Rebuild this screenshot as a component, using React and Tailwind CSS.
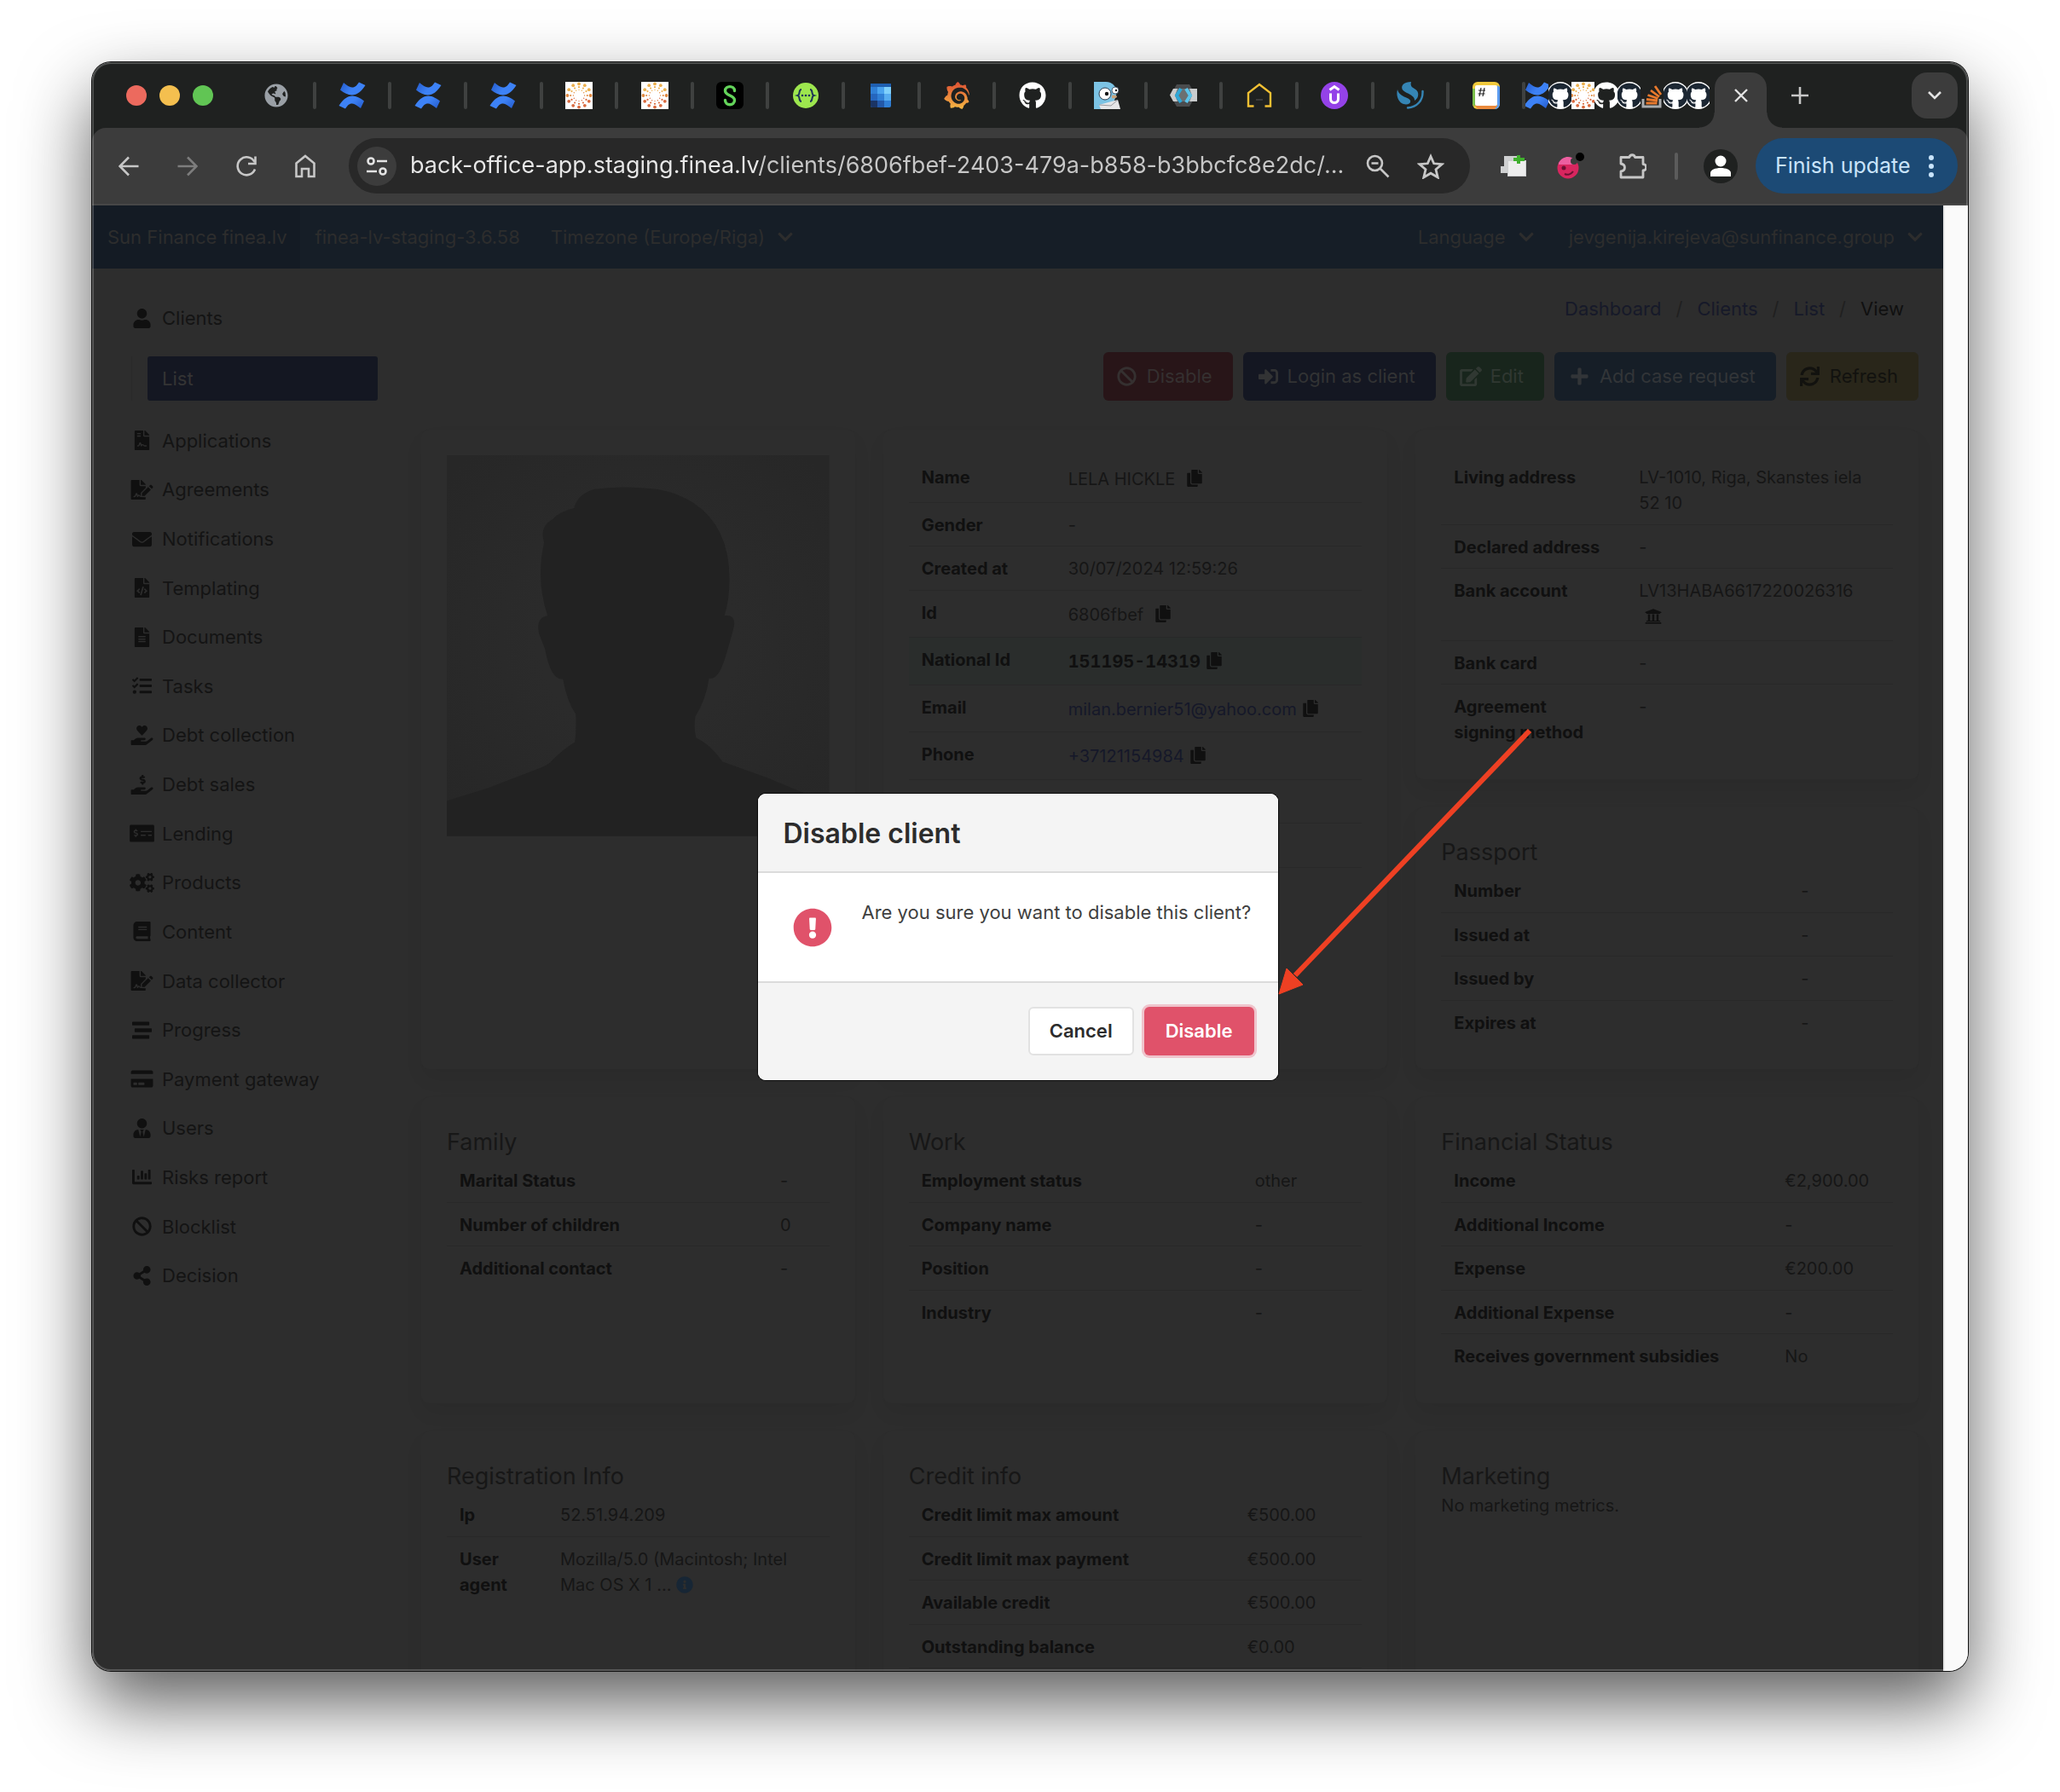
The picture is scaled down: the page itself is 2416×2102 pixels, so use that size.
import React from "react";
import {
  FaUser, FaFileContract, FaFileSignature, FaEnvelope, FaFileCode, FaFileAlt, FaTasks,
  FaHandHoldingHeart, FaHandHoldingUsd, FaMoneyCheckAlt, FaCogs, FaBook, FaStream,
  FaCreditCard, FaUserTie, FaChartBar, FaBan, FaShareAlt, FaCopy, FaUniversity,
  FaInfoCircle, FaSignInAlt, FaEdit, FaPlus, FaSync, FaExclamationCircle, FaGithub,
  FaGlobeAmericas, FaChevronDown,
} from "react-icons/fa";
import { SiGrafana } from "react-icons/si";

/* ---------- favicons ---------- */

const Confluence = () => (
  <svg viewBox="0 0 32 32" className="size-8 shrink-0">
    <defs>
      <linearGradient id="cfTop" x1="0" y1="0" x2="1" y2="0.4">
        <stop offset="0" stopColor="#2359c9" />
        <stop offset="0.6" stopColor="#3d82f6" />
      </linearGradient>
      <linearGradient id="cfBottom" x1="1" y1="1" x2="0" y2="0.4">
        <stop offset="0" stopColor="#2359c9" />
        <stop offset="0.6" stopColor="#3d82f6" />
      </linearGradient>
    </defs>
    <path d="M6 1 2 9.500c4.500 3.500 9 6 13.500 6 6.500 0 11-4 16-11.500L24 .5c-3 4.500-5 6-8 6S10 4 6 1Z" fill="url(#cfTop)" />
    <path d="M26 31 30 22.500c-4.500-3.500-9-6-13.500-6-6.500 0-11 4-16 11.500l7.500 3.500c3-4.500 5-6 8-6s6 2.500 10 5.500Z" fill="url(#cfBottom)" />
  </svg>
);

const Sun = () => (
  <svg viewBox="0 0 32 32" className="size-8 shrink-0">
    <rect width="32" height="32" fill="#fff" />
    {[[13.6, 1.9], [9.8, 1.1], [6.6, 0.7]].map(([r, s], ring) =>
      Array.from({ length: 12 }, (_, i) => {
        const a = (i * Math.PI) / 6;
        const y = 16 + r * Math.sin(a);
        return (
          <circle key={ring + "-" + i} cx={16 + r * Math.cos(a)} cy={y} r={s}
            fill={y > 19 ? "#d96a3f" : y > 12 ? "#e08a42" : "#ecb04e"} />
        );
      })
    )}
  </svg>
);

const SLogo = () => (
  <svg viewBox="0 0 32 32" className="size-8 shrink-0">
    <rect width="32" height="32" rx="6" fill="#000" />
    <path d="M21.500 10.500C21.500 4 10.500 4 10.500 10.500c0 6 11 5 11 11 0 7-11 7-11 0" fill="none" stroke="#63d35a" strokeWidth="3.400" strokeLinecap="round" />
  </svg>
);

const Swagger = () => (
  <svg viewBox="0 0 32 32" className="size-8 shrink-0">
    <circle cx="16" cy="16" r="15" fill="#9de64e" />
    <path d="M11 9c-4 0-1 6-4.500 7 3.500 1 .5 7 4.500 7M21 9c4 0 1 6 4.500 7-3.500 1-.5 7-4.500 7" fill="none" stroke="#1d3557" strokeWidth="2" />
    <g fill="#1d3557"><circle cx="12" cy="16" r="1.300" /><circle cx="16" cy="16" r="1.300" /><circle cx="20" cy="16" r="1.300" /></g>
  </svg>
);

const Squares = () => (
  <svg viewBox="0 0 32 32" className="size-8 shrink-0">
    <rect x="4" y="2" width="24" height="28" rx="2" fill="#2f7fd6" />
    <path d="M4 2h24v4H4z" fill="#1f5fb0" />
    <path d="M12 6h8v8h-8z" fill="#4aa3ef" /><path d="M20 6h8v8h-8z" fill="#7fd0fb" />
    <path d="M4 14h8v8H4z" fill="#2566be" /><path d="M20 14h8v8h-8z" fill="#56acf0" />
    <path d="M4 22h8v8H6a2 2 0 0 1-2-2z" fill="#1b3464" /><path d="M12 22h8v8h-8z" fill="#2358a8" />
  </svg>
);

const Gopher = () => (
  <svg viewBox="0 0 32 32" className="size-8 shrink-0">
    <path d="M0 0h14c8 0 12 6 13 12l-3 10-6 10H0Z" fill="#7cc3e4" />
    <circle cx="13" cy="14" r="7" fill="#fff" stroke="#2c3e50" strokeWidth="1" />
    <circle cx="25" cy="10" r="4" fill="#fff" stroke="#2c3e50" strokeWidth="0.800" />
    <circle cx="15" cy="14" r="2.200" fill="#111" /><circle cx="26" cy="10" r="1.200" fill="#111" />
    <path d="M21 16c3-1 6 0 6 1.500S23 20 21 19Z" fill="#c9a27a" />
    <path d="m6 27 22-6 3 11H8Z" fill="#e6e6e8" /><path d="m6 27 14 1 8-7" fill="none" stroke="#9a9aa0" />
  </svg>
);

const Keycloak = () => (
  <svg viewBox="0 0 32 32" className="size-8 shrink-0">
    <path d="M8 3h15l4 7v12l-4 7H8l-5-9V12Z" fill="#4a4c4e" />
    <path d="M4 8h28v15H4L0 15.500Z" fill="#c9cccd" />
    <path d="M9 8h14l3 8-3 7H9l-3-7Z" fill="#6b7072" />
    <path d="M13 8 8 16l5 8" fill="none" stroke="#2fa8d8" strokeWidth="4" />
    <path d="m19 8 5 8-5 8" fill="none" stroke="#5cc4ea" strokeWidth="4" />
  </svg>
);

const House = () => (
  <svg viewBox="0 0 32 32" className="size-8 shrink-0">
    <path d="M9.500 28.500H3V13L16 3l13 10v15.500h-6.500" fill="none" stroke="#f2c033" strokeWidth="2.400" />
    <path d="M12 21h8" stroke="#3c3c3c" strokeWidth="2" />
  </svg>
);

const PurpleU = () => (
  <svg viewBox="0 0 32 32" className="size-8 shrink-0">
    <circle cx="16" cy="16" r="16" fill="#9442e8" />
    <path d="m10.500 9.500 5.500-4 5.500 4M11.500 13.500V20c0 6 9 6 9 0v-6.500" fill="none" stroke="#fff" strokeWidth="3" />
  </svg>
);

const Swirl = () => (
  <svg viewBox="0 0 32 32" className="size-8 shrink-0">
    <path d="M17 0C9 0 5 4 6.500 8.500 8 13 22 15 21 22c4-2 6-8 2.500-12C21 7 15 7 17 0Z" fill="#3585b5" />
    <path d="M1 9c-2 7 1 15 7 17 5 1.500 9-1 8-4C15 18 3 18 1 9Z" fill="#3585b5" />
    <path d="M30.500 11C31 22 24 29.500 13 30.500" fill="none" stroke="#3585b5" strokeWidth="2.400" strokeLinecap="round" />
  </svg>
);

const HashTile = () => (
  <svg viewBox="0 0 32 32" className="size-8 shrink-0">
    <rect width="32" height="32" rx="6" fill="#f0c93c" />
    <path d="M29 4v24l-4 4h1a6 6 0 0 0 6-6V6z" fill="#5b9bef" />
    <path d="M3 27h26v1l-3 4H6l-3-4z" fill="#ea8a3c" />
    <path d="M0 8h3v20l-1 1-2-3z" fill="#7cc04b" />
    <rect x="3" y="4" width="26" height="24" rx="2" fill="#fff" />
    <path d="m10 7-2 10m6-10-2 10M7 10h8M6.500 14h8" stroke="#222" strokeWidth="1.200" />
  </svg>
);

const Github = () => <FaGithub className="size-8 shrink-0 text-white" />;

const GithubRing = () => (
  <span className="flex size-8 shrink-0 items-center justify-center rounded-full bg-white">
    <FaGithub className="size-[30px] text-[#1c2733]" />
  </span>
);

const Stack = () => (
  <svg viewBox="0 0 32 32" className="size-8 shrink-0">
    <path d="M5 20v9h20v-9" fill="none" stroke="#a9abad" strokeWidth="3" />
    <path d="M8.500 25h13M9 20.500l13 1.500M10.500 15.500l12 4M14 10l10 7.500M19 5l7 10" stroke="#e8792d" strokeWidth="2.800" />
  </svg>
);

const tabs = [
  () => <FaGlobeAmericas className="size-7 text-[#9aa0a6]" />,
  Confluence, Confluence, Confluence, Sun, Sun, SLogo, Swagger, Squares,
  () => <SiGrafana className="size-8" fill="url(#grafana)" />,
  Github, Gopher, Keycloak, House, PurpleU, Swirl, HashTile,
];
const narrowTabs = [Confluence, GithubRing, Sun, Github, GithubRing, Stack, GithubRing, GithubRing];

/* ---------- browser chrome ---------- */

function TabStrip() {
  return (
    <div className="flex h-[77px] shrink-0 items-center bg-[#1f2120]">
      <svg className="absolute size-0" aria-hidden="true">
        <defs>
          <linearGradient id="grafana" x1="0" y1="0" x2="0" y2="1">
            <stop offset="0" stopColor="#dd4f33" /><stop offset="1" stopColor="#f5b843" />
          </linearGradient>
        </defs>
      </svg>
      <div className="flex w-[174px] shrink-0 gap-[15px] pl-10">
        <button aria-label="Close window" className="size-6 rounded-full bg-[#ec6a5e]" />
        <button aria-label="Minimise window" className="size-6 rounded-full bg-[#f4bf4f]" />
        <button aria-label="Zoom window" className="size-6 rounded-full bg-[#61c554]" />
      </div>
      <div className="flex min-w-0 flex-1">
        {tabs.map((Icon, i) => (
          <div key={i} className="flex h-8 flex-1 items-center">
            <span className="flex flex-1 justify-center"><Icon /></span>
            <span className="h-8 w-1 rounded-full bg-[#3f4140]" />
          </div>
        ))}
      </div>
      <div className="flex w-[222px] shrink-0">
        {narrowTabs.map((Icon, i) => (
          <span key={i} className="flex h-8 w-[27px] justify-center overflow-hidden"><Icon /></span>
        ))}
      </div>
      <div className="relative flex h-[65px] w-[61px] shrink-0 items-center justify-center self-end rounded-t-[18px] bg-[#3c3c3c] pb-[11px]">
        <span className="absolute bottom-0 right-full size-[18px] bg-[radial-gradient(circle_at_0_0,#1f2120_17px,#3c3c3c_18px)]" />
        <span className="absolute bottom-0 left-full size-[18px] bg-[radial-gradient(circle_at_100%_0,#1f2120_17px,#3c3c3c_18px)]" />
        <button aria-label="Close tab">
          <svg viewBox="0 0 16 16" className="size-4"><path d="m1 1 14 14M15 1 1 15" stroke="#e3e3e3" strokeWidth="2.400" /></svg>
        </button>
      </div>
      <div className="flex w-[236px] shrink-0 items-center justify-between pl-[29px] pr-3">
        <button aria-label="New tab">
          <svg viewBox="0 0 20 20" className="size-5"><path d="M10 0v20M0 10h20" stroke="#c7c7c7" strokeWidth="2.600" /></svg>
        </button>
        <button aria-label="Search tabs" className="flex h-[54px] w-[54px] items-center justify-center rounded-[18px] bg-[#3c3c3c]">
          <svg viewBox="0 0 16 10" className="h-[10px] w-4"><path d="m1 1 7 7 7-7" fill="none" stroke="#e3e3e3" strokeWidth="2.600" /></svg>
        </button>
      </div>
    </div>
  );
}

const ToolButton = ({ label, children, className = "" }) => (
  <button aria-label={label} className={"flex size-8 shrink-0 items-center justify-center " + className}>{children}</button>
);

function Toolbar() {
  return (
    <div className="shrink-0 bg-[#1f2120]">
      <div className="flex h-[91px] items-center rounded-t-[16px] border-b-2 border-[#474747] bg-[#3c3c3c] pl-[27px] pr-3">
        <div className="flex w-[274px] shrink-0 gap-[37px] text-[#c7c7c7]">
          <ToolButton label="Back">
            <svg viewBox="0 0 24 24" className="size-6"><path d="M23.500 12H2M12 1.500 1.500 12 12 22.500" fill="none" stroke="currentColor" strokeWidth="2.600" /></svg>
          </ToolButton>
          <ToolButton label="Forward" className="text-[#7d7d7d]">
            <svg viewBox="0 0 24 24" className="size-6"><path d="M.5 12H22M12 1.500 22.500 12 12 22.500" fill="none" stroke="currentColor" strokeWidth="2.600" /></svg>
          </ToolButton>
          <ToolButton label="Reload">
            <svg viewBox="0 0 24 24" className="size-6"><path d="M22 15.500A10.500 10.500 0 1 1 21.500 7M22.500.5V9H14" fill="none" stroke="currentColor" strokeWidth="2.600" /></svg>
          </ToolButton>
          <ToolButton label="Home">
            <svg viewBox="0 0 26 28" className="h-7 w-[26px]"><path d="M2.500 10.500 13 2l10.500 8.500V26H17v-9H9v9H2.500Z" fill="none" stroke="currentColor" strokeWidth="2.600" /></svg>
          </ToolButton>
        </div>
        <div className="flex h-[65px] min-w-0 flex-1 items-center rounded-full bg-[#282828] pl-[10px] pr-[30px]">
          <button aria-label="Site information" className="flex size-[46px] shrink-0 items-center justify-center rounded-full bg-[#3c3c3c]">
            <svg viewBox="0 0 24 22" className="h-[22px] w-6" fill="none" stroke="#e3e3e3" strokeWidth="2.600">
              <circle cx="5" cy="5" r="3.500" /><path d="M12 5h12M0 17h12" /><circle cx="19" cy="17" r="3.500" />
            </svg>
          </button>
          <input
            aria-label="Address"
            readOnly
            value="back-office-app.staging.finea.lv/clients/6806fbef-2403-479a-b858-b3bbcfc8e2dc/..."
            className="ml-4 min-w-0 flex-1 bg-[linear-gradient(to_right,#e8e8e8_409px,#c7c7c7_409px)] bg-clip-text text-[27px] text-transparent outline-none"
          />
          <div className="flex gap-[30px] text-[#c7c7c7]">
            <ToolButton label="Zoom">
              <svg viewBox="0 0 28 28" className="size-7" fill="none" stroke="currentColor" strokeWidth="2.600"><circle cx="10.500" cy="10.500" r="8.500" /><path d="M17 17l9.500 9.500M6.500 10.500h8" /></svg>
            </ToolButton>
            <ToolButton label="Bookmark">
              <svg viewBox="0 0 32 30" className="h-[30px] w-8" fill="none" stroke="currentColor" strokeWidth="2.800"><path d="m16 3.500 3.700 8.300 9.300.9-7 6.100 2.200 9.200L16 23.200 7.800 28l2.200-9.200-7-6.100 9.300-.9Z" /></svg>
            </ToolButton>
          </div>
        </div>
        <div className="flex w-[335px] shrink-0 items-center pl-9">
          <ToolButton label="Add clip extension">
            <svg viewBox="0 0 32 30" className="h-[30px] w-8">
              <path d="M4 3h18v5h8v19H8v-4H0v-8h4Z" fill="#cfd0d1" /><path d="M9 9h20v17H9z" fill="#ededed" />
              <path d="M21 2v10M15 7h13" stroke="#3fae2d" strokeWidth="4" />
            </svg>
          </ToolButton>
          <ToolButton label="Recorder extension" className="ml-[34px]">
            <svg viewBox="0 0 32 32" className="size-8">
              <circle cx="13" cy="18" r="12.500" fill="#d8265f" /><path d="M2 12C6 4 16 3 20 8l1 6H2Z" fill="#ec5fa0" />
              <circle cx="8" cy="18" r="2.500" fill="#6d1033" /><path d="M9 25c4 2 8 0 10-3" stroke="#6d1033" strokeWidth="2" fill="none" />
              <circle cx="20" cy="10" r="4" fill="#3c3c3c" /><circle cx="27" cy="5" r="5" fill="#000" />
            </svg>
          </ToolButton>
          <ToolButton label="Extensions" className="ml-[41px]">
            <svg viewBox="0 0 32 34" className="h-[34px] w-8"><path d="M2 6.500h10a3.300 3.300 0 0 1 6.500 0H28v8a3.600 3.600 0 0 1 0 7.500v8H2v-7c6-1 6-8 0-9Z" fill="none" stroke="#c7c7c7" strokeWidth="2.800" strokeLinejoin="round" /></svg>
          </ToolButton>
          <span className="ml-[33px] h-8 w-1 rounded-full bg-[#5c5c5c]" />
          <button aria-label="Profile" className="ml-[30px] flex size-10 items-center justify-center rounded-full bg-[#1f2120]">
            <svg viewBox="0 0 24 26" className="h-[26px] w-6" fill="#fff"><circle cx="12" cy="7" r="6.500" /><path d="M0 25v-4c0-4 6-6 12-6s12 2 12 6v4Z" /></svg>
          </button>
        </div>
        <button className="flex h-[65px] w-[237px] shrink-0 items-center justify-between rounded-full bg-[#1c4a75] pl-[23px] pr-7 text-[25px] text-[#c9e4fb]">
          Finish update
          <svg viewBox="0 0 6 28" className="h-7 w-[6px]" fill="#c9e4fb"><circle cx="3" cy="4" r="3" /><circle cx="3" cy="14" r="3" /><circle cx="3" cy="24" r="3" /></svg>
        </button>
      </div>
    </div>
  );
}

/* ---------- page ---------- */

function NavBar() {
  const chevron = <FaChevronDown className="size-5" />;
  return (
    <nav className="flex h-[74px] shrink-0 items-stretch bg-[#161e27] text-[22px] text-[#2d2d2d]">
      <a href="#home" className="flex items-center bg-[#141b24] pl-[18px] pr-[15px]">Sun Finance finea.lv</a>
      <span className="flex items-center px-[18px]">finea-lv-staging-3.6.58</span>
      <button className="flex items-center gap-[14px] px-[18px]">Timezone (Europe/Riga) {chevron}</button>
      <button className="ml-auto flex items-center gap-[14px] px-[20px]">Language {chevron}</button>
      <button className="flex items-center gap-[14px] pl-[20px] pr-[23px]">jevgenija.kirejeva@sunfinance.group {chevron}</button>
    </nav>
  );
}

const menu = [
  [FaFileContract, "Applications"], [FaFileSignature, "Agreements"], [FaEnvelope, "Notifications"],
  [FaFileCode, "Templating"], [FaFileAlt, "Documents"], [FaTasks, "Tasks"],
  [FaHandHoldingHeart, "Debt collection"], [FaHandHoldingUsd, "Debt sales"], [FaMoneyCheckAlt, "Lending"],
  [FaCogs, "Products"], [FaBook, "Content"], [FaFileSignature, "Data collector"], [FaStream, "Progress"],
  [FaCreditCard, "Payment gateway"], [FaUserTie, "Users"], [FaChartBar, "Risks report"],
  [FaBan, "Blocklist"], [FaShareAlt, "Decision"],
];

const MenuLink = ({ icon: Icon, children }) => (
  <a href="#menu" className="flex items-center gap-[6px]">
    <span className="flex w-9 justify-center"><Icon className="h-[23px] w-[29px] text-[#101010]" /></span>
    {children}
  </a>
);

function Sidebar() {
  return (
    <aside className="w-[386px] shrink-0 pl-10 pr-[51px] pt-[43px] text-[22px] leading-[30px] text-[#141414]">
      <MenuLink icon={FaUser}>Clients</MenuLink>
      <div className="ml-[6px] mt-[30px] border-l border-[#292929] pl-[18px]">
        <a href="#list" className="flex h-[52px] items-center rounded-[3px] bg-[#141722] px-[17px] text-[#343434]">List</a>
      </div>
      <ul className="mt-[18px] flex h-[1037px] flex-col">
        {menu.map(([Icon, label]) => (
          <li key={label} className="flex flex-1 items-center"><MenuLink icon={Icon}>{label}</MenuLink></li>
        ))}
      </ul>
    </aside>
  );
}

const Card = ({ title, children, className = "" }) => (
  <section className={"rounded-[9px] bg-[#2d2d2d] p-[30px] shadow-[0_12px_24px_-3px_rgba(0,0,0,0.07)] " + className}>
    {title && <h2 className="h-[42px] text-[27px] leading-[45px] text-[#171717]">{title}</h2>}
    {children}
  </section>
);

const Rows = ({ rows, col }) => (
  <table className="w-full table-fixed text-[20px] leading-[30px]">
    <colgroup><col className={col} /><col /></colgroup>
    <tbody>
      {rows.map(([label, value, extra = ""], i) => (
        <tr key={i} className={"border-b border-[#282828] align-top last:border-b-0 *:pb-[10px] even:*:pb-[9px] " + extra}>
          <th scope="row" className="px-[15px] pt-[11px] text-left font-bold text-[#101010]">{label}</th>
          <td className="px-[15px] pt-[11px]">{value}</td>
        </tr>
      ))}
    </tbody>
  </table>
);

const Copyable = ({ children, wide }) => (
  <span className="flex h-[34px] items-center">
    {children}
    <button aria-label="Copy" className={wide ? "mb-[3px] ml-[13px]" : "mb-[3px] ml-[6px]"}><FaCopy className="size-5 text-[#101010]" /></button>
  </span>
);

function Portrait() {
  return (
    <svg viewBox="0 0 448 446" className="w-full" role="img" aria-label="Client photo">
      <defs>
        <radialGradient id="halo" cx="0.5" cy="0.48" r="0.65">
          <stop offset="0.4" stopColor="#2b2b2b" /><stop offset="1" stopColor="#272727" />
        </radialGradient>
      </defs>
      <rect width="448" height="446" fill="url(#halo)" />
      <path
        fill="#222222"
        d="M0 446V405L48 390 105 368Q116 364 121 360 135 345 150 336 152 320 151 303 141 289 136 262 122 264 115 227L108 209Q104 190 118 188 104 145 114 102 108 84 124 75 132 66 149 62 153 46 172 40 205 35 247 40 270 44 289 56 331 84 331 145 331 170 325 188 341 186 335 206L327 234Q318 265 307 261 304 285 291 306 289 320 292 331 308 338 323 359L373 377 419 396 448 405V446Z"
      />
    </svg>
  );
}

const actions = [
  [FaBan, "Disable", "bg-[#281518] text-[#353030] pl-4 gap-3", "w-[23px]"],
  [FaSignInAlt, "Login as client", "bg-[#141722] text-[#323334] pl-[18px] gap-[11px]", "w-[23px]"],
  [FaEdit, "Edit", "bg-[#18251c] text-[#303832] pl-4 gap-[10px]", "w-[26px]"],
  [FaPlus, "Add case request", "bg-[#161e27] text-[#323538] pl-[18px] gap-3", "w-[23px]"],
  [FaSync, "Refresh", "bg-[#29261a] text-[#12120f] pl-4 gap-3", "w-[23px]"],
];

function Content() {
  const link = "text-[#151829]";
  return (
    <main className="min-w-0 flex-1 pr-[29px] pt-8">
      <nav aria-label="Breadcrumb" className="flex h-[30px] items-center justify-end gap-[17px] pr-[17px] text-[22px] text-[#202020]">
        <a href="#dashboard" className="text-[#161929]">Dashboard</a>/
        <a href="#clients" className="text-[#161929]">Clients</a>/
        <a href="#list" className="text-[#161929]">List</a>/
        <span className="text-[#101010]">View</span>
      </nav>
      <div className="mt-9 flex h-[57px] justify-end gap-3">
        {actions.map(([Icon, label, tone, size]) => (
          <button key={label} className={"flex items-center rounded-[6px] pr-6 text-[22px] " + tone}><Icon className={"h-[23px] " + size} />{label}</button>
        ))}
      </div>
      <div className="mt-[34px] grid grid-cols-[509fr_592fr_590fr] gap-[33px] text-[20px] text-[#161616]">
        <Card><Portrait /></Card>
        <Card>
          <Rows
            col="w-[172px]"
            rows={[
              ["Name", <Copyable wide>LELA HICKLE</Copyable>],
              ["Gender", "-"],
              ["Created at", "30/07/2024 12:59:26"],
              ["Id", <Copyable wide>6806fbef</Copyable>],
              ["National Id", <Copyable><b className="tabular-nums text-[#101010]">151195-14319</b></Copyable>, "bg-[#2a2d2c]"],
              ["Email", <Copyable><a href="mailto:milan.bernier51@yahoo.com" className={link}>milan.bernier51@yahoo.com</a></Copyable>],
              ["Phone", <Copyable><a href="tel:+37121154984" className={link}>+37121154984</a></Copyable>],
              ["\u00a0", "\u00a0"],
              ["\u00a0", "\u00a0"],
              ["\u00a0", "\u00a0"],
            ]}
          />
        </Card>
        <div className="flex flex-col gap-[33px]">
          <Card>
            <Rows
              col="w-[217px]"
              rows={[
                ["Living address", "LV-1010, Riga, Skanstes iela 52 10"],
                ["Declared address", "-"],
                ["Bank account", <>LV13HABA6617220026316<FaUniversity className="mb-2 ml-[7px] mt-[5px] size-5 text-[#101010]" /></>],
                ["Bank card", "-"],
                ["Agreement signing\u00a0method", "-"],
              ]}
            />
          </Card>
          <Card title="Passport" className="flex-1">
            <Rows col="w-[407px]" rows={[["Number", "-"], ["Issued at", "-"], ["Issued by", "-"], ["Expires at", "-"]]} />
          </Card>
        </div>
        <Card title="Family">
          <Rows col="w-[376px]" rows={[["Marital Status", "-"], ["Number of children", "0"], ["Additional contact", "-"]]} />
        </Card>
        <Card title="Work">
          <Rows col="w-[391px]" rows={[["Employment status", "other"], ["Company name", "-"], ["Position", "-"], ["Industry", "-"]]} />
        </Card>
        <Card title="Financial Status">
          <Rows
            col="w-[388px]"
            rows={[["Income", "€2,900.00"], ["Additional Income", "-"], ["Expense", "€200.00"], ["Additional Expense", "-"], ["Receives government subsidies", "No"]]}
          />
        </Card>
        <Card title="Registration Info">
          <Rows
            col="w-[118px]"
            rows={[
              ["Ip", "52.51.94.209"],
              ["User agent", <>Mozilla/5.0 (Macintosh; Intel Mac OS X 1 ... <FaInfoCircle className="mb-1 inline size-5 text-[#172635]" /></>],
            ]}
          />
        </Card>
        <Card title="Credit info">
          <Rows
            col="w-[382px]"
            rows={[["Credit limit max amount", "€500.00"], ["Credit limit max payment", "€500.00"], ["Available credit", "€500.00"], ["Outstanding balance", "€0.00"], ["\u00a0", "\u00a0"]]}
          />
        </Card>
        <Card title="Marketing"><p className="leading-[30px]">No marketing metrics.</p></Card>
      </div>
    </main>
  );
}

function Dialog() {
  return (
    <div role="dialog" aria-labelledby="dialog-title" className="relative w-[610px]">
      <div className="overflow-hidden rounded-[9px] bg-white shadow-[0_0_0_1px_#0a0a0a]">
        <header className="flex h-[93px] items-center border-b-2 border-[#dbdbdb] bg-[#f4f4f4] px-[30px] pt-[3px]">
          <h1 id="dialog-title" className="text-[32px] font-semibold text-[#2c2c2c]">Disable client</h1>
        </header>
        <div className="flex h-[127px] pl-[41px] pt-[29px]">
          <FaExclamationCircle className="mt-3 size-[46px] shrink-0 text-[#e0526a]" />
          <p className="ml-[35px] whitespace-nowrap text-[22px] leading-[34px] text-[#3f3f3f]">Are you sure you want to disable this client?</p>
        </div>
        <footer className="flex h-[116px] items-center justify-end gap-3 border-t-2 border-[#dbdbdb] bg-[#f4f4f4] px-7">
          <button className="h-[57px] rounded-[6px] border-2 border-[#e2e2e2] bg-white px-[23px] text-[22px] font-semibold text-[#2c2c2c]">Cancel</button>
          <button className="h-[57px] rounded-[6px] bg-[#e0526a] px-[25px] text-[22px] font-semibold text-white shadow-[0_0_0_3px_#efc4cc]">Disable</button>
        </footer>
      </div>
      <svg viewBox="0 0 300 320" className="absolute -top-[81px] left-full h-[320px] w-[300px]" aria-hidden="true">
        <path d="M295 7 20 294" stroke="#ee4023" strokeWidth="6" />
        <path d="M1 316 10 286l19 19Z" fill="#ee4023" stroke="#ee4023" strokeLinejoin="round" />
      </svg>
    </div>
  );
}

export default function App() {
  return (
    <div className="flex h-screen bg-white px-[108px] pb-[142px] pt-[73px] font-['Inter',sans-serif]">
      <div className="relative flex min-w-0 flex-1 flex-col overflow-hidden rounded-[22px] shadow-[0_0_0_1px_#111,0_38px_84px_rgba(0,0,0,0.64)]">
        <TabStrip />
        <Toolbar />
        <div className="flex min-h-0 flex-1">
          <div className="relative flex min-w-0 flex-1 flex-col overflow-hidden bg-[#2d2d2d]">
            <NavBar />
            <div className="flex min-h-0 flex-1">
              <Sidebar />
              <Content />
            </div>
            <div className="absolute inset-0 flex items-center justify-center pb-1"><Dialog /></div>
          </div>
          <div className="w-[29px] shrink-0 border-l-2 border-[#e8e8e8] bg-[#fafafa]" />
        </div>
        <div className="pointer-events-none absolute inset-0 rounded-[22px] shadow-[inset_0_0_0_2px_rgba(255,255,255,0.2)]" />
      </div>
    </div>
  );
}
